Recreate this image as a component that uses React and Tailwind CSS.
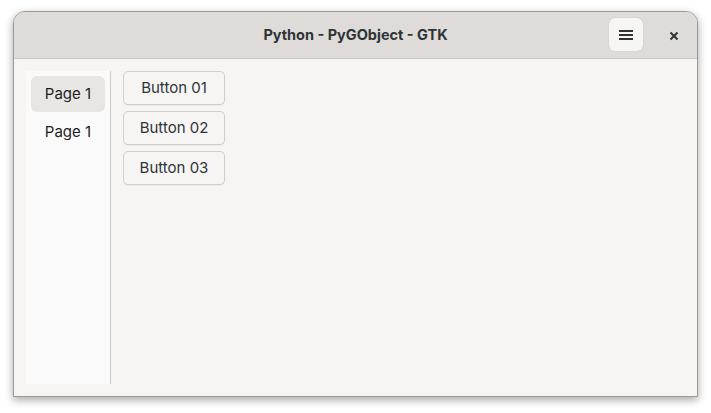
export default function App() {
  const font = { fontFamily: 'Inter, "Noto Sans", sans-serif' };
  return (
    <div className="w-[711px] h-[413px] bg-white pt-[11px] pl-[13px]" style={font}>
      <div className="w-[685px] h-[386px] flex flex-col rounded-t-[12px] border border-[#9a9996] bg-[#f6f5f4] shadow-[0_3px_9px_rgba(0,0,0,0.35)] overflow-hidden">
        <div className="h-[47px] shrink-0 relative flex items-center justify-center bg-[#dedbd8] border-b border-[#c8c5c1]">
          <span className="text-[14.5px] font-bold text-[#2e3436]">Python - PyGObject - GTK</span>
          <div className="absolute left-[595px] top-[6px] w-[34px] h-[33px] rounded-[6px] bg-[#f7f6f5] flex items-center justify-center shadow-[0_0_1px_rgba(0,0,0,0.2)]">
            <svg width="16" height="14" viewBox="0 0 16 14">
              <rect x="1" y="2" width="14" height="2" fill="#2e3436" />
              <rect x="1" y="6" width="14" height="2" fill="#2e3436" />
              <rect x="1" y="10" width="14" height="2" fill="#2e3436" />
            </svg>
          </div>
          <div className="absolute left-[652px] top-[16px] w-[16px] h-[16px] flex items-center justify-center">
            <svg width="10" height="10" viewBox="0 0 10 10">
              <path d="M1.5 1.5 L8.5 8.5 M8.5 1.5 L1.5 8.5" stroke="#2e3436" strokeWidth="2" />
            </svg>
          </div>
        </div>
        <div className="flex-1 flex pt-[12px] pb-[12px] pl-[12px]">
          <div className="w-[85px] bg-[#fafafa] border-r border-[#cdc9c5] flex flex-col px-[5px] pt-[5px] gap-[2px]">
            <div className="h-[36px] rounded-[6px] bg-[#e8e6e3] flex items-center justify-center text-[15px] text-[#1e1e1e]">Page 1</div>
            <div className="h-[36px] rounded-[6px] flex items-center justify-center text-[15px] text-[#1e1e1e]">Page 1</div>
          </div>
          <div className="flex flex-col gap-[6px] pl-[12px]">
            {["Button 01", "Button 02", "Button 03"].map((t) => (
              <div key={t} className="w-[102px] h-[34px] rounded-[5px] border border-[#d2ceca] bg-[#f6f5f4] flex items-center justify-center text-[15px] text-[#2e3436] shadow-[0_1px_0_rgba(0,0,0,0.04)]">{t}</div>
            ))}
          </div>
        </div>
      </div>
    </div>
  );
}
